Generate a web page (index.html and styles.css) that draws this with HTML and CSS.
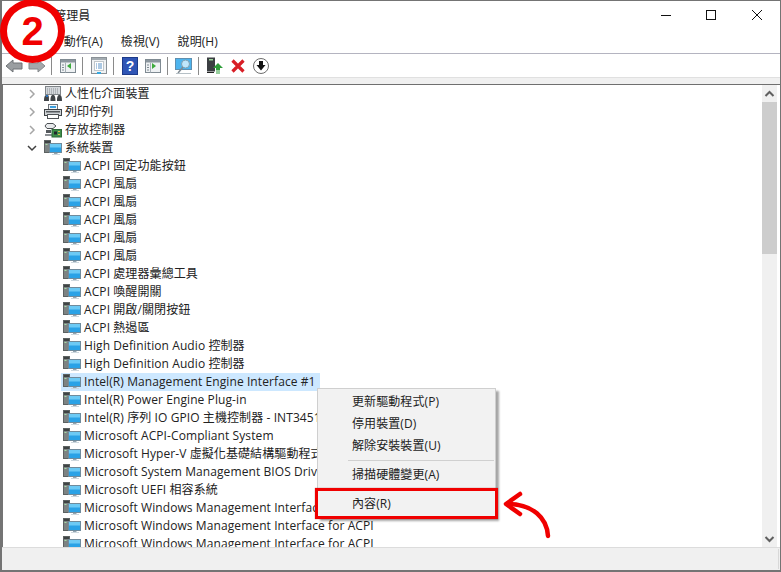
FILE: index.html
```html
<!DOCTYPE html>
<html lang="zh-Hant">
<head>
<meta charset="utf-8">
<title>裝置管理員</title>
<link rel="stylesheet" href="styles.css">
</head>
<body>
<svg class="defs" width="0" height="0" aria-hidden="true">
  <symbol id="sys" viewBox="0 0 18 16">
    <rect x="0.500" y="0.500" width="6" height="12" fill="#7d8383" stroke="#5d6262"/>
    <rect x="1" y="1" width="5" height="2" fill="#3f4444"/>
    <rect x="1.500" y="4" width="2" height="1" fill="#a6dca6"/>
    <rect x="5.500" y="3.500" width="12" height="9" fill="#2aa2e6" stroke="#6f8b9c"/>
    <rect x="6" y="4" width="11" height="3.500" fill="#6ccaf5"/>
    <rect x="10" y="13" width="3.500" height="1" fill="#93a5b0"/>
    <rect x="8" y="14" width="8" height="1" fill="#cdd7dd"/>
  </symbol>
  <symbol id="kbd" viewBox="0 0 18 16">
    <rect x="1.500" y="0.500" width="15" height="8" fill="#d4d8dc" stroke="#7f8488"/>
    <path d="M3 3h12M3 5h12M3 7h12" stroke="#888d92" stroke-dasharray="1 1"/>
    <path d="M0 15c0-5 1-6 3-6s2 1 2 6zM6.500 15c0-5 1-6 2.500-6s2.500 1 2.500 6zM13 15c0-5 1-6 2.500-6s2.500 1 2.500 6z" fill="#3f4347"/>
    <rect x="2" y="9" width="2" height="2" fill="#2a6fb8"/>
  </symbol>
  <symbol id="prn" viewBox="0 0 18 16">
    <rect x="4.500" y="0.500" width="9" height="5" fill="#f4f6f8" stroke="#6c7278"/>
    <rect x="6" y="2" width="6" height="2" fill="#3ba0e0"/>
    <rect x="0.500" y="5.500" width="17" height="6" fill="#cfd3d6" stroke="#3e4246"/>
    <rect x="2" y="7" width="14" height="1.500" fill="#55595d"/>
    <rect x="3.500" y="10.500" width="11" height="4" fill="#fff" stroke="#505458"/>
  </symbol>
  <symbol id="sto" viewBox="0 0 18 16">
    <path d="M3 1.500h6l3 2.500-3 2.500H3L1 4z" fill="#e8eaec" stroke="#4c5054"/>
    <path d="M2 8h5v3H2z" fill="#55595d"/>
    <rect x="1" y="12" width="7" height="2" fill="#8c9094"/>
    <rect x="8" y="7.500" width="9.500" height="7.500" fill="#3f8f4a" stroke="#2f6b38"/>
    <rect x="10" y="9.500" width="3" height="3" fill="#22282c"/>
    <rect x="14" y="9" width="2" height="1" fill="#d8c050"/>
    <rect x="14" y="12" width="2" height="1" fill="#d8c050"/>
  </symbol>
  <symbol id="panel" viewBox="0 0 16 16">
    <rect x="0.500" y="1.500" width="15" height="13" fill="#eef1f3" stroke="#7f8a92"/>
    <rect x="1" y="2" width="14" height="2.500" fill="#8b969e"/>
    <path d="M5.500 4.500v10" stroke="#a7b0b7"/>
    <path d="M2 7h2M2 9.500h2M2 12h2" stroke="#7f8a92"/>
  </symbol>
</svg>

<div class="window">
  <header class="titlebar">
    <span class="title">裝置管理員</span>
    <div class="controls">
      <svg class="ctl" width="46" height="28" viewBox="0 0 46 28"><path d="M19 14.500h10" stroke="#111" fill="none"/></svg>
      <svg class="ctl" width="46" height="28" viewBox="0 0 46 28"><rect x="18.500" y="9.500" width="9" height="9" stroke="#111" fill="none"/></svg>
      <svg class="ctl" width="46" height="28" viewBox="0 0 46 28"><path d="M18 9l10 10M28 9l-10 10" stroke="#111" fill="none"/></svg>
    </div>
  </header>

  <nav class="menubar">
    <span class="menu">檔案(F)</span>
    <span class="menu">動作(A)</span>
    <span class="menu">檢視(V)</span>
    <span class="menu">說明(H)</span>
  </nav>

  <div class="toolbar">
    <span class="btn"><svg width="18" height="16" viewBox="0 0 18 16"><path d="M1 8l7-6v3h9v6H8v3z" fill="#9a9ea1" stroke="#6f7376"/></svg></span>
    <span class="btn"><svg width="18" height="16" viewBox="0 0 18 16"><path d="M17 8l-7-6v3H1v6h9v3z" fill="#a4a8ab" stroke="#85898c"/></svg></span>
    <i class="sep"></i>
    <span class="btn"><svg width="16" height="16"><use href="#panel"/><path d="M11 5v6l-4-3z" fill="#3caa3c"/></svg></span>
    <i class="sep"></i>
    <span class="btn"><svg width="16" height="18" viewBox="0 0 16 18"><rect x="0.500" y="0.500" width="15" height="16" fill="#f0f2f3" stroke="#8a9197"/><rect x="1" y="1" width="14" height="2" fill="#a3abb1"/><rect x="3.500" y="4.500" width="9" height="9" fill="#fff" stroke="#c0c6ca"/><path d="M5 7h1M7 7h4M5 9h1M7 9h4M5 11h1M7 11h4" stroke="#5a93c8"/><rect x="6" y="15" width="4" height="2" fill="#35a8e0"/></svg></span>
    <i class="sep"></i>
    <span class="btn"><svg width="16" height="18" viewBox="0 0 16 18"><rect x="0.500" y="0.500" width="15" height="17" fill="#2f55b5" stroke="#1d3a8a"/><text class="qm" x="8" y="14" text-anchor="middle">?</text></svg></span>
    <span class="btn"><svg width="16" height="16"><use href="#panel"/><path d="M7 5v6l4-3z" fill="#3caa3c"/></svg></span>
    <i class="sep"></i>
    <span class="btn"><svg width="18" height="18" viewBox="0 0 18 18"><rect x="0.500" y="1.500" width="16" height="11" fill="#4db4ee" stroke="#5f8fb0"/><circle cx="10.500" cy="7" r="4" fill="#bfe6fb" stroke="#7f9fb2"/><path d="M8 10l-5 6" stroke="#7f8a92" stroke-width="1.500"/><path d="M1 16.500h15" stroke="#b6c0c6"/></svg></span>
    <i class="sep"></i>
    <span class="btn"><svg width="18" height="18" viewBox="0 0 18 18"><rect x="1" y="0.500" width="8" height="14" fill="#3b3f42"/><rect x="3" y="2" width="4" height="1.500" fill="#9ad29a"/><path d="M1 15.500h7" stroke="#222"/><path d="M12 6l5 5h-3v2h-4v-2H7z" fill="#2f9e3a"/><path d="M10 14h4M10 16h4" stroke="#2f9e3a"/></svg></span>
    <span class="btn"><svg width="16" height="16" viewBox="0 0 16 16"><path d="M2.500 2.500l11 11M13.500 2.500l-11 11" stroke="#d81e26" stroke-width="3.200" fill="none"/></svg></span>
    <span class="btn"><svg width="18" height="18" viewBox="0 0 18 18"><circle cx="9" cy="9" r="7.500" fill="#fff" stroke="#6d6d6d"/><path d="M7 4h4v4h2.500L9 13.500 4.500 8H7z" fill="#111"/></svg></span>
  </div>
  <div class="band"></div>

  <main class="content">
    <div class="tree">
      <div class="row top"><svg class="chev" width="10" height="10" viewBox="0 0 10 10"><path d="M3 1l4 4-4 4" stroke="#a6a6a6" stroke-width="1.500" fill="none"/></svg><span class="item"><svg class="ico"><use href="#kbd"/></svg>人性化介面裝置</span></div>
      <div class="row top"><svg class="chev" width="10" height="10" viewBox="0 0 10 10"><path d="M3 1l4 4-4 4" stroke="#a6a6a6" stroke-width="1.500" fill="none"/></svg><span class="item"><svg class="ico"><use href="#prn"/></svg>列印佇列</span></div>
      <div class="row top"><svg class="chev" width="10" height="10" viewBox="0 0 10 10"><path d="M3 1l4 4-4 4" stroke="#a6a6a6" stroke-width="1.500" fill="none"/></svg><span class="item"><svg class="ico"><use href="#sto"/></svg>存放控制器</span></div>
      <div class="row top"><svg class="chev" width="10" height="10" viewBox="0 0 10 10"><path d="M1 3l4 4 4-4" stroke="#404040" stroke-width="1.500" fill="none"/></svg><span class="item"><svg class="ico"><use href="#sys"/></svg>系統裝置</span></div>
      <div class="row child"><span class="item"><svg class="ico"><use href="#sys"/></svg>ACPI 固定功能按鈕</span></div>
      <div class="row child"><span class="item"><svg class="ico"><use href="#sys"/></svg>ACPI 風扇</span></div>
      <div class="row child"><span class="item"><svg class="ico"><use href="#sys"/></svg>ACPI 風扇</span></div>
      <div class="row child"><span class="item"><svg class="ico"><use href="#sys"/></svg>ACPI 風扇</span></div>
      <div class="row child"><span class="item"><svg class="ico"><use href="#sys"/></svg>ACPI 風扇</span></div>
      <div class="row child"><span class="item"><svg class="ico"><use href="#sys"/></svg>ACPI 風扇</span></div>
      <div class="row child"><span class="item"><svg class="ico"><use href="#sys"/></svg>ACPI 處理器彙總工具</span></div>
      <div class="row child"><span class="item"><svg class="ico"><use href="#sys"/></svg>ACPI 喚醒開關</span></div>
      <div class="row child"><span class="item"><svg class="ico"><use href="#sys"/></svg>ACPI 開啟/關閉按鈕</span></div>
      <div class="row child"><span class="item"><svg class="ico"><use href="#sys"/></svg>ACPI 熱遏區</span></div>
      <div class="row child"><span class="item"><svg class="ico"><use href="#sys"/></svg>High Definition Audio 控制器</span></div>
      <div class="row child"><span class="item"><svg class="ico"><use href="#sys"/></svg>High Definition Audio 控制器</span></div>
      <div class="row child"><span class="item selected"><svg class="ico"><use href="#sys"/></svg>Intel(R) Management Engine Interface #1</span></div>
      <div class="row child"><span class="item"><svg class="ico"><use href="#sys"/></svg>Intel(R) Power Engine Plug-in</span></div>
      <div class="row child"><span class="item"><svg class="ico"><use href="#sys"/></svg>Intel(R) 序列 IO GPIO 主機控制器 - INT3451</span></div>
      <div class="row child"><span class="item"><svg class="ico"><use href="#sys"/></svg>Microsoft ACPI-Compliant System</span></div>
      <div class="row child"><span class="item"><svg class="ico"><use href="#sys"/></svg>Microsoft Hyper-V 虛擬化基礎結構驅動程式</span></div>
      <div class="row child"><span class="item"><svg class="ico"><use href="#sys"/></svg>Microsoft System Management BIOS Driver</span></div>
      <div class="row child"><span class="item"><svg class="ico"><use href="#sys"/></svg>Microsoft UEFI 相容系統</span></div>
      <div class="row child"><span class="item"><svg class="ico"><use href="#sys"/></svg>Microsoft Windows Management Interface for ACPI</span></div>
      <div class="row child"><span class="item"><svg class="ico"><use href="#sys"/></svg>Microsoft Windows Management Interface for ACPI</span></div>
      <div class="row child"><span class="item"><svg class="ico"><use href="#sys"/></svg>Microsoft Windows Management Interface for ACPI</span></div>
    </div>
    <div class="scrollbar">
      <svg class="arrow" width="15" height="17" viewBox="0 0 15 17"><path d="M3.500 11l4-4 4 4" stroke="#606060" stroke-width="2" fill="none"/></svg>
      <div class="track"><div class="thumb"></div></div>
      <svg class="arrow" width="15" height="17" viewBox="0 0 15 17"><path d="M3.500 7l4 4 4-4" stroke="#606060" stroke-width="2" fill="none"/></svg>
    </div>
  </main>

  <footer class="statusbar"><i class="grip"></i></footer>
</div>

<div class="ctxmenu">
  <div class="ctx">更新驅動程式(P)</div>
  <div class="ctx">停用裝置(D)</div>
  <div class="ctx">解除安裝裝置(U)</div>
  <div class="ctx-sep"></div>
  <div class="ctx">掃描硬體變更(A)</div>
  <div class="ctx-sep hidden"></div>
  <div class="ctx">內容(R)</div>
</div>
<div class="redbox"></div>
<svg class="callout" width="60" height="52" viewBox="0 0 60 52"><path d="M48 46C47 28 33 14 7 14" stroke="#f00000" stroke-width="4.500" stroke-linecap="round" fill="none"/><path d="M20 4L6 14l14 10" stroke="#f00000" stroke-width="4.500" stroke-linecap="round" stroke-linejoin="round" fill="none"/></svg>
<div class="badge">2</div>
</body>
</html>
```

FILE: styles.css
```css
* { box-sizing: border-box; }
html, body { margin: 0; padding: 0; background: #fff; }
body {
  width: 781px;
  height: 572px;
  overflow: hidden;
  position: relative;
  font: 12px/18px "Open Sans", "Noto Sans CJK TC", sans-serif;
  letter-spacing: 0.09px;
  color: #222;
}
.defs { position: absolute; }

.window {
  width: 781px;
  height: 572px;
  display: flex;
  flex-direction: column;
  border: 1px solid #747474;
  border-width: 1px 1px 2px 2px;
  background: #fff;
}

.titlebar {
  height: 27px;
  display: flex;
  align-items: flex-start;
  justify-content: space-between;
  flex: none;
}
.title { padding: 6px 0 0 28px; }
.controls { display: flex; }
.ctl { display: block; width: 46px; height: 28px; }

.menubar {
  height: 26px;
  display: flex;
  align-items: center;
  gap: 18px;
  padding: 3px 0 0 6px;
  border-bottom: 1px solid #b4b4c0;
  flex: none;
}
.menu { white-space: nowrap; }

.toolbar {
  height: 23px;
  display: flex;
  align-items: center;
  padding-top: 1px;
  flex: none;
}
.btn { width: 23px; height: 22px; display: flex; align-items: center; justify-content: center; }
.sep { width: 1px; height: 18px; background: #8a8a8a; margin: 0 4px 0 3px; }

.band {
  height: 8px;
  flex: none;
  background: #f0f0f0;
  border-top: 1px solid #e0e0e0;
  border-bottom: 1px solid #6f6f6f;
}

.content {
  flex: 1;
  min-height: 0;
  display: flex;
  border-left: 1px solid #747474;
  background: #fff;
  padding-right: 3px;
}

.tree { flex: 1; min-width: 0; overflow: hidden; }
.row { height: 18px; display: flex; align-items: center; white-space: nowrap; }
.row.top { padding-left: 24px; }
.row.child { padding-left: 58px; }
.chev { width: 10px; height: 10px; margin-right: 5px; flex: none; }
.item { display: inline-flex; align-items: center; height: 18px; padding: 0 4px 0 2px; }
.item.selected { background: #cde8ff; }
.ico { width: 18px; height: 16px; margin-right: 3px; flex: none; }

.scrollbar { width: 15px; flex: none; background: #f0f0f0; display: flex; flex-direction: column; }
.arrow { display: block; flex: none; }
.track { flex: 1; }
.thumb { height: 152px; background: #cdcdcd; }

.statusbar {
  height: 23px;
  flex: none;
  background: #f0f0f0;
  border-top: 1px solid #dcdcdc;
  display: flex;
  justify-content: flex-end;
}
.grip { width: 1px; height: 20px; margin: 1px 1px 0 0; background: #d8d8d8; }

.ctxmenu {
  position: absolute;
  left: 317px;
  top: 388px;
  width: 179px;
  height: 130px;
  background: #f2f2f2;
  border: 1px solid #cfcfcf;
  box-shadow: 3px 3px 2px rgba(0, 0, 0, 0.35);
  padding-top: 2px;
}
.ctx { height: 22px; line-height: 21px; padding-left: 34px; white-space: nowrap; }
.ctx-sep { height: 1px; margin: 3px 1px 3px 30px; background: #d0d0d0; }
.ctx-sep.hidden { height: 0; margin: 7px 0 0; background: none; }

.redbox {
  position: absolute;
  left: 315px;
  top: 488px;
  width: 183px;
  height: 31px;
  border: 3px solid #f00000;
  box-shadow: 0 0 1px rgba(120, 0, 0, 0.6);
}
.callout { position: absolute; left: 500px; top: 490px; }

.badge {
  position: absolute;
  left: 0;
  top: -1px;
  width: 65px;
  height: 64px;
  border: 7px solid #f00000;
  border-radius: 50%;
  background: #fff;
  color: #f00000;
  display: flex;
  align-items: center;
  justify-content: center;
  font: bold 40px/1 "Liberation Sans", sans-serif;
  letter-spacing: 0;
}
.qm { font: bold 14px "Liberation Sans", sans-serif; fill: #fff; }
```
